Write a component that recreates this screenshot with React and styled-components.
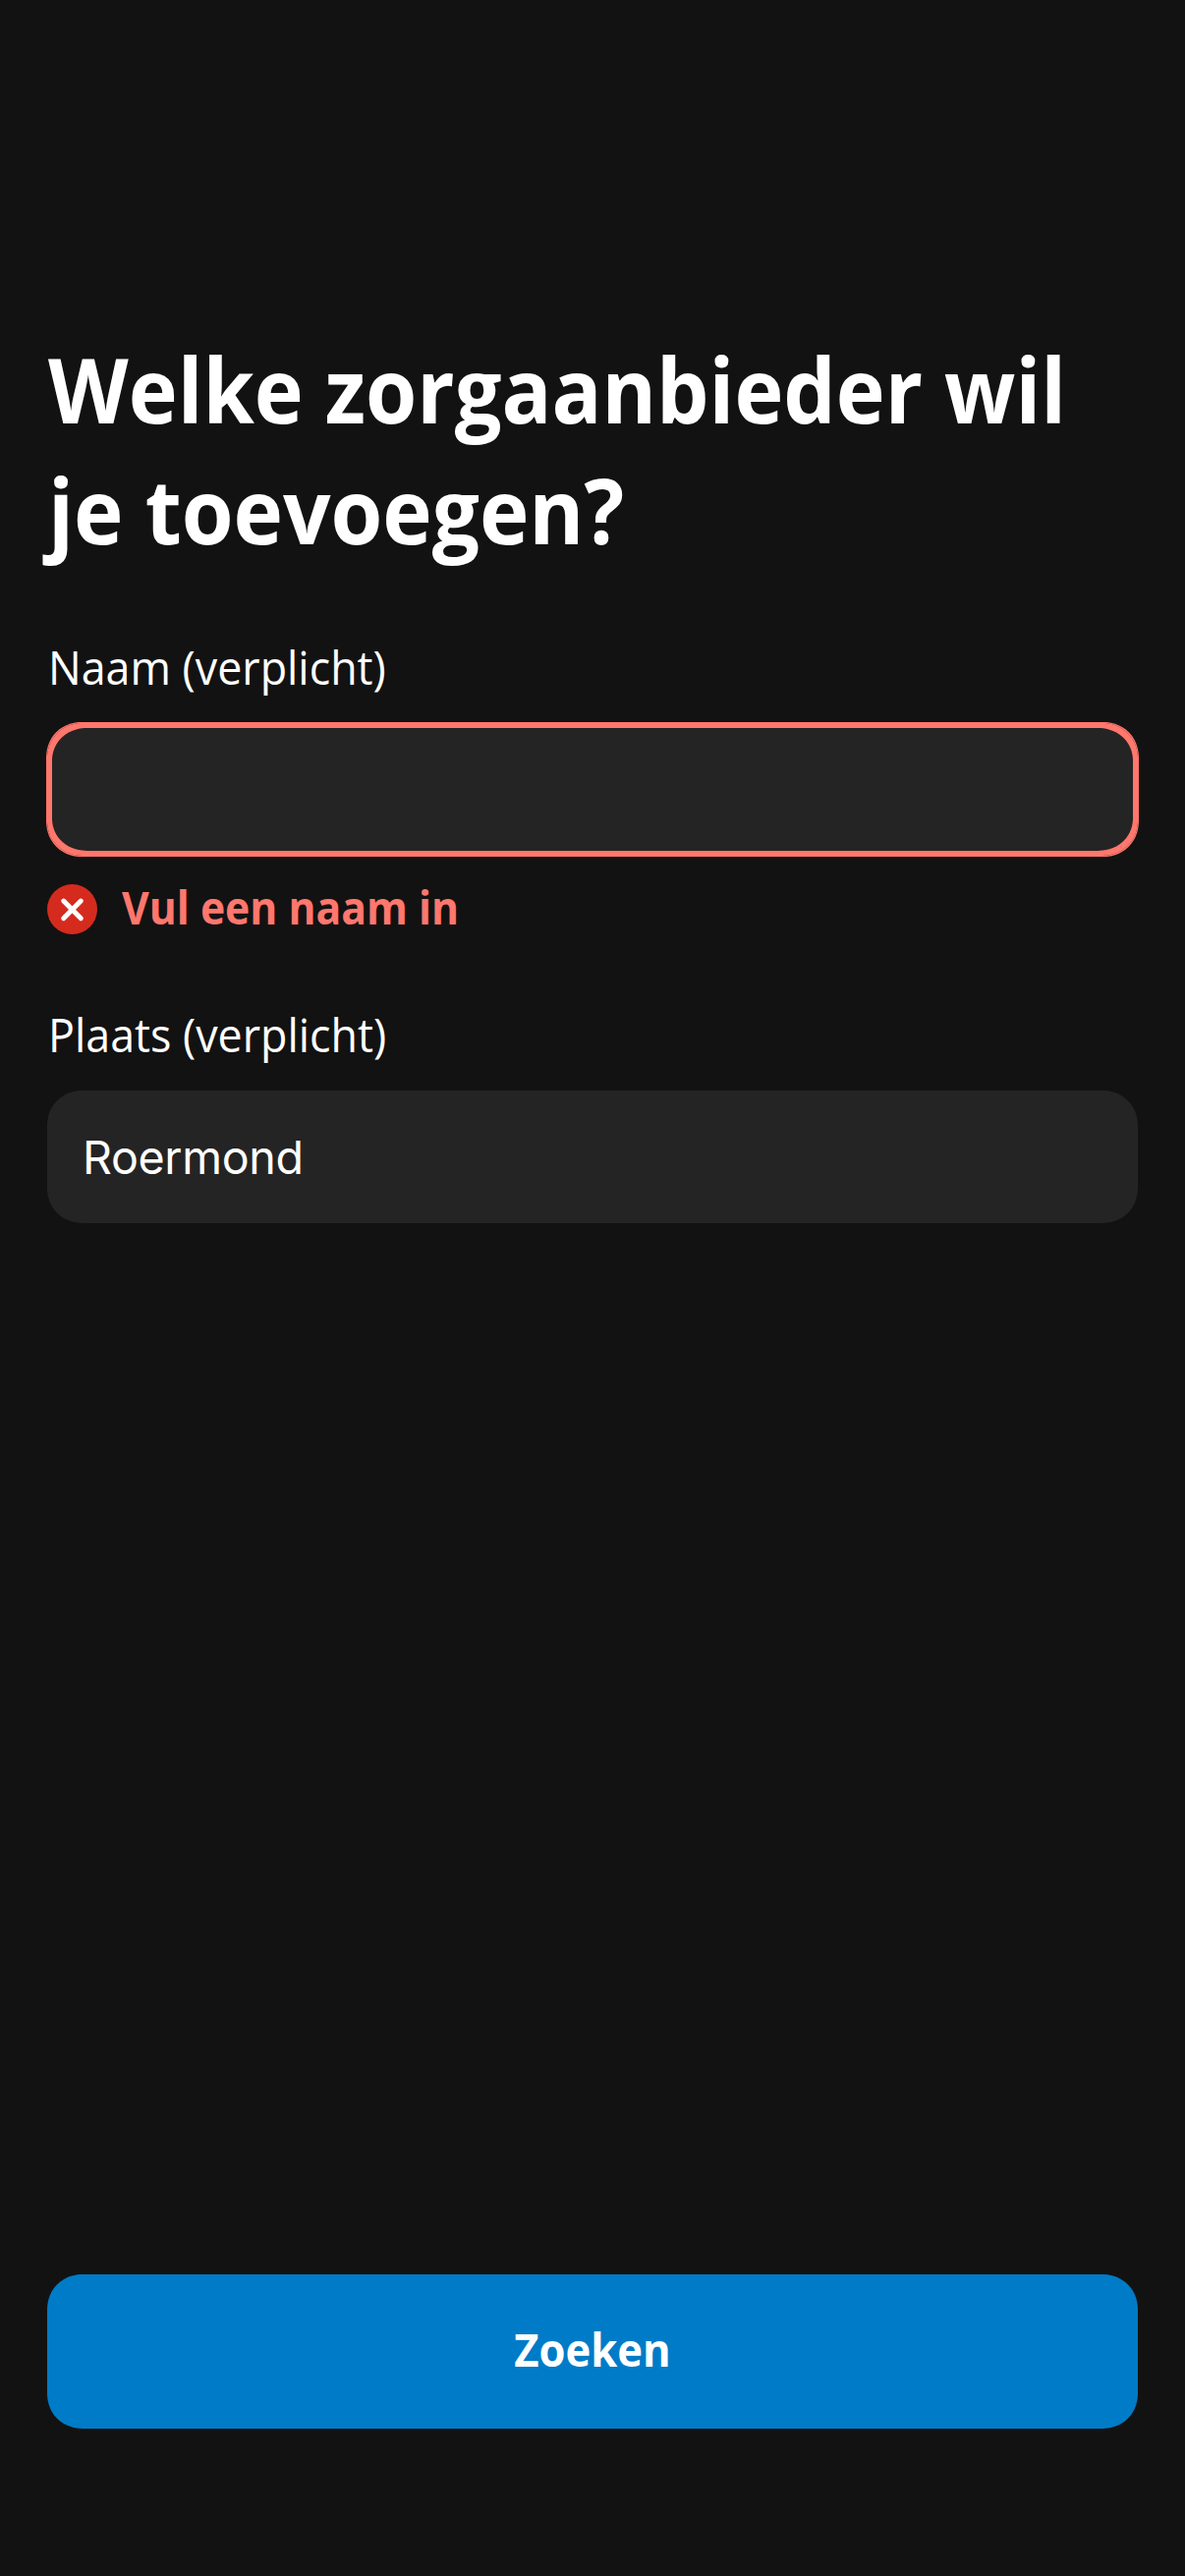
import React, { useState } from "react";
import styled, { createGlobalStyle } from "styled-components";

const color = {
  page: "#121212",
  field: "#242424",
  text: "#ffffff",
  error: "#ff776d",
  errorFill: "#d52b1e",
  action: "#007bc7",
};

const GlobalStyle = createGlobalStyle`
  *, *::before, *::after { box-sizing: border-box; }
  body {
    margin: 0;
    background: ${color.page};
    color: ${color.text};
    font-family: "Open Sans", "Noto Sans", sans-serif;
  }
`;

const Screen = styled.main`
  display: flex;
  flex-direction: column;
  justify-content: space-between;
  height: 2622px;
  padding: 335px 48px 150px;
  overflow: hidden;
`;

const Form = styled.form`
  display: flex;
  flex-direction: column;
`;

const Title = styled.h1`
  margin: 0 0 65px;
  font-size: 90.6px;
  line-height: 123px;
  font-weight: 700;
  white-space: nowrap;
`;

/* Slightly narrowed line of text */
const Narrow = styled.span`
  display: block;
  width: max-content;
  margin-left: ${(p) => p.$indent || 0}px;
  transform: scaleX(${(p) => p.$scale});
  transform-origin: ${(p) => p.$origin || "left"} center;
`;

const Field = styled.div`
  display: flex;
  flex-direction: column;
  & + & {
    margin-top: 69px;
  }
`;

const Label = styled.label`
  margin-bottom: 24px;
  font-size: 47.5px;
  line-height: 66px;
  font-weight: 400;
`;

const Input = styled.input`
  height: 135px;
  padding: 0 36px;
  border: 0;
  outline: 0;
  border-radius: 36px;
  corner-shape: superellipse(1.06);
  background: ${color.field};
  color: ${color.text};
  font: 400 46.6px Inter, Roboto, sans-serif;
  letter-spacing: -0.35px;
  box-shadow: ${(p) =>
    p.$invalid
      ? `0 0 0 1px ${color.error}, inset 0 0 0 5px ${color.error}`
      : "none"};
`;

const ErrorRow = styled.div`
  display: flex;
  align-items: center;
  gap: 25px;
  height: 51px;
  margin-top: 29px;
`;

const ErrorIcon = styled.svg`
  flex: none;
  width: 51px;
  height: 51px;
`;

const ErrorText = styled.span`
  padding-bottom: 6px;
  color: ${color.error};
  font-size: 47px;
  line-height: 66px;
  font-weight: 700;
  white-space: nowrap;
`;

const Submit = styled.button`
  display: flex;
  align-items: center;
  justify-content: center;
  height: 157px;
  padding: 0 0 5px;
  border: 0;
  border-radius: 36px;
  corner-shape: superellipse(1.06);
  background: ${color.action};
  color: ${color.text};
  font-family: inherit;
  font-size: 47px;
  line-height: 64px;
  font-weight: 700;
`;

function FormField({ id, label, value, onChange, error }) {
  return (
    <Field>
      <Label htmlFor={id}>
        <Narrow $scale={0.943} $indent={1}>
          {label}
        </Narrow>
      </Label>
      <Input
        id={id}
        value={value}
        onChange={(e) => onChange(e.target.value)}
        $invalid={Boolean(error)}
      />
      {error && (
        <ErrorRow>
          <ErrorIcon viewBox="0 0 51 51" aria-hidden="true">
            <circle cx="25.5" cy="25.5" r="25.5" fill={color.errorFill} />
            <path
              d="M16.7 17.1 34.3 34.7M34.3 17.1 16.7 34.7"
              stroke="#fff"
              strokeWidth="5"
              strokeLinecap="round"
            />
          </ErrorIcon>
          <ErrorText>
            <Narrow $scale={0.908}>{error}</Narrow>
          </ErrorText>
        </ErrorRow>
      )}
    </Field>
  );
}

export default function App() {
  const [name, setName] = useState("");
  const [city, setCity] = useState("Roermond");

  return (
    <>
      <GlobalStyle />
      <Screen>
        <Form id="search" onSubmit={(e) => e.preventDefault()}>
          <Title>
            <Narrow $scale={0.933} $indent={0.5}>
              Welke zorgaanbieder wil
            </Narrow>
            <Narrow $scale={0.942} $indent={1}>
              je toevoegen?
            </Narrow>
          </Title>
          <FormField
            id="name"
            label="Naam (verplicht)"
            value={name}
            onChange={setName}
            error={name ? "" : "Vul een naam in"}
          />
          <FormField
            id="city"
            label="Plaats (verplicht)"
            value={city}
            onChange={setCity}
          />
        </Form>
        <Submit type="submit" form="search">
          <Narrow $scale={0.928} $origin="center">
            Zoeken
          </Narrow>
        </Submit>
      </Screen>
    </>
  );
}
